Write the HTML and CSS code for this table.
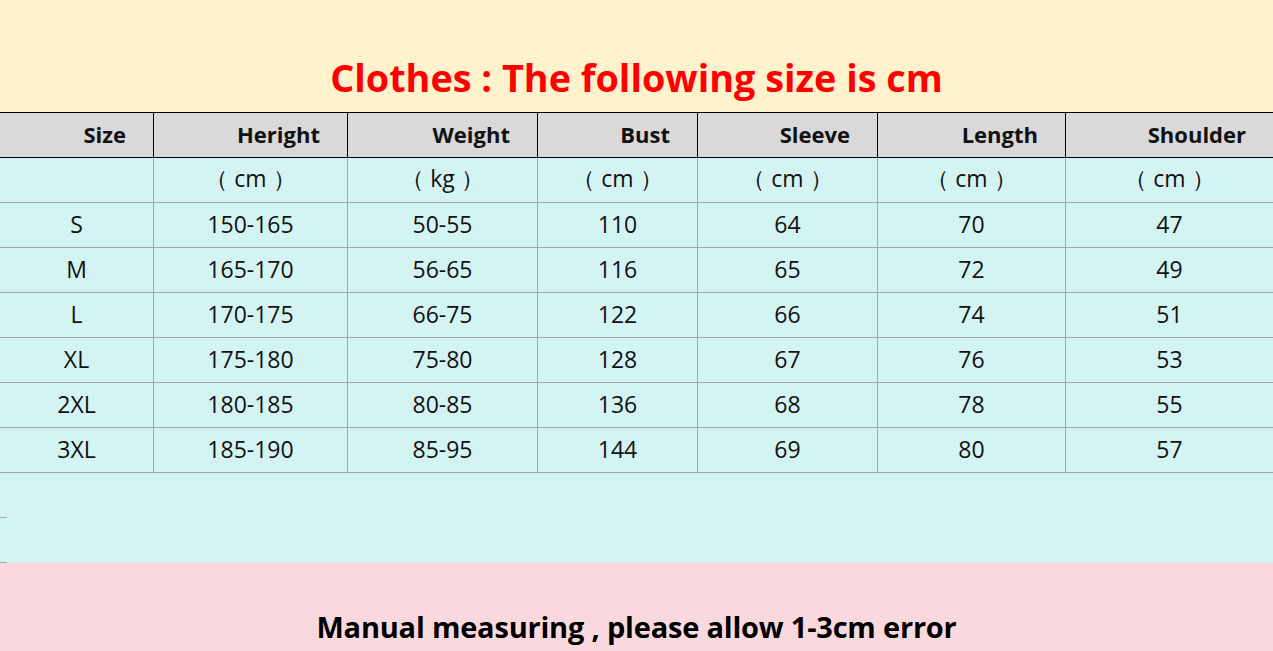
FILE: index.html
```html
<!DOCTYPE html>
<html>
<head>
<meta charset="utf-8">
<link rel="stylesheet" href="styles.css">
</head>
<body>
<div class="top">
  <h1 class="title">Clothes : The following size is cm</h1>
</div>
<div class="table">
  <div class="row head">
    <div class="c">Size</div><div class="c">Heright</div><div class="c">Weight</div><div class="c">Bust</div><div class="c">Sleeve</div><div class="c">Length</div><div class="c">Shoulder</div>
  </div>
  <div class="row">
    <div class="c"></div><div class="c">（ cm ）</div><div class="c">（ kg ）</div><div class="c">（ cm ）</div><div class="c">（ cm ）</div><div class="c">（ cm ）</div><div class="c">（ cm ）</div>
  </div>
  <div class="row">
    <div class="c">S</div><div class="c">150-165</div><div class="c">50-55</div><div class="c">110</div><div class="c">64</div><div class="c">70</div><div class="c">47</div>
  </div>
  <div class="row">
    <div class="c">M</div><div class="c">165-170</div><div class="c">56-65</div><div class="c">116</div><div class="c">65</div><div class="c">72</div><div class="c">49</div>
  </div>
  <div class="row">
    <div class="c">L</div><div class="c">170-175</div><div class="c">66-75</div><div class="c">122</div><div class="c">66</div><div class="c">74</div><div class="c">51</div>
  </div>
  <div class="row">
    <div class="c">XL</div><div class="c">175-180</div><div class="c">75-80</div><div class="c">128</div><div class="c">67</div><div class="c">76</div><div class="c">53</div>
  </div>
  <div class="row">
    <div class="c">2XL</div><div class="c">180-185</div><div class="c">80-85</div><div class="c">136</div><div class="c">68</div><div class="c">78</div><div class="c">55</div>
  </div>
  <div class="row">
    <div class="c">3XL</div><div class="c">185-190</div><div class="c">85-95</div><div class="c">144</div><div class="c">69</div><div class="c">80</div><div class="c">57</div>
  </div>
  <div class="blank">
    <div class="stub"></div>
    <div class="stub"></div>
  </div>
</div>
<div class="bottom">
  <p class="note">Manual measuring , please allow 1-3cm error</p>
</div>
</body>
</html>
```

FILE: styles.css
```css
html, body {
  margin: 0;
  padding: 0;
}
body {
  width: 1273px;
  height: 651px;
  overflow: hidden;
  font-family: "Open Sans", "Noto Sans", sans-serif;
  color: #111;
}
.top {
  height: 112px;
  background: #fff2cc;
  display: flex;
  align-items: flex-end;
  justify-content: center;
}
.title {
  margin: 0 0 9px 0;
  color: #ff0000;
  font-size: 37.8px;
  font-weight: 700;
  line-height: 50px;
  letter-spacing: 0;
}
.table {
  background: #d3f4f3;
}
.row {
  display: grid;
  grid-template-columns: 154px 194px 190px 160px 180px 188px 207px;
  height: 45px;
  border-bottom: 1px solid #a6a6a6;
  box-sizing: border-box;
}
.row .c {
  border-right: 1px solid #a6a6a6;
  display: flex;
  align-items: center;
  justify-content: center;
  font-size: 23px;
  padding-bottom: 3px;
  box-sizing: border-box;
}
.row .c:last-child {
  border-right: none;
}
.row.head {
  height: 46px;
  background: #d9d9d9;
  border-top: 1px solid #000;
  border-bottom: 1px solid #000;
}
.row.head .c {
  border-right-color: #000;
  justify-content: flex-end;
  padding-right: 27px;
  padding-bottom: 3px;
  font-weight: 700;
  font-size: 22px;
  color: #111;
}
.blank {
  height: 90px;
  display: flex;
  flex-direction: column;
  justify-content: flex-end;
  gap: 44px;
}
.stub {
  width: 7px;
  height: 1px;
  background: #a6a6a6;
}
.bottom {
  height: 89px;
  background: #fad9de;
  display: flex;
  align-items: flex-end;
  justify-content: center;
}
.note {
  margin: 0 0 5px 0;
  font-size: 29px;
  font-weight: 700;
  line-height: 40px;
  color: #000;
  letter-spacing: -0.2px;
}
```
